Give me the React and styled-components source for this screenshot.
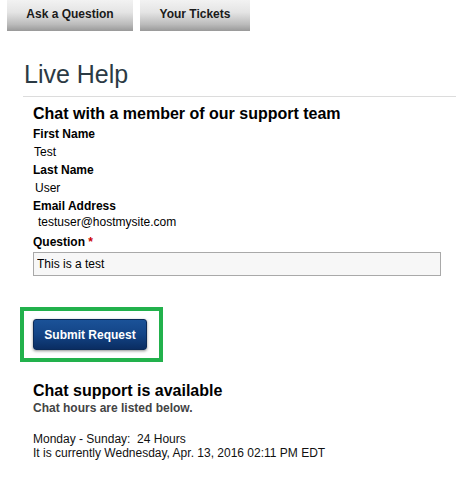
import React from "react";
import styled, { createGlobalStyle } from "styled-components";

const GlobalStyle = createGlobalStyle`
  body {
    margin: 0;
    background: #fff;
    font-family: "Liberation Sans", Arial, sans-serif;
    color: #000;
  }
`;

const Page = styled.div`
  width: 456px;
  height: 485px;
  overflow: hidden;
`;

const Tabs = styled.div`
  display: flex;
  gap: 7px;
  padding-left: 7px;
`;

const Tab = styled.div`
  width: ${(p) => p.w}px;
  height: 31px;
  display: flex;
  align-items: center;
  justify-content: center;
  padding-bottom: 3px;
  box-sizing: border-box;
  font-size: 12px;
  font-weight: bold;
  color: #1a1a1a;
  background: linear-gradient(#f2f2f2 0%, #e4e4e4 40%, #bcbcbc 78%, #999 100%);
`;

const Main = styled.div`
  padding: 28px 0 0 23px;
`;

const Title = styled.h1`
  margin: 0;
  padding: 0 0 7px 1px;
  font-size: 25px;
  font-weight: normal;
  line-height: 30px;
  color: #2b3a44;
  border-bottom: 1px solid #dcdcdc;
`;

const Form = styled.div`
  padding: 8px 0 0 10px;
`;

const FormTitle = styled.h2`
  margin: 0 0 2px;
  font-size: 16px;
  line-height: 18px;
  font-weight: bold;
`;

const Label = styled.div`
  font-size: 12px;
  font-weight: bold;
  line-height: 18px;
  margin-top: ${(p) => p.mt || 0}px;
`;

const Req = styled.span`
  color: #cc0000;
`;

const Value = styled.div`
  font-size: 12px;
  line-height: 18px;
  padding-left: ${(p) => p.indent || 1}px;
  margin-top: ${(p) => p.mt || 0}px;
`;

const Input = styled.input`
  display: block;
  box-sizing: border-box;
  width: 408px;
  height: 24px;
  margin-top: 1px;
  padding: 0 3px;
  border: 1px solid #a9a9a9;
  background: #f7f7f7;
  font-family: "Liberation Sans", Arial, sans-serif;
  font-size: 12px;
  color: #000;
  outline: none;
`;

const Highlight = styled.div`
  margin: 31px 0 0 -13px;
  width: 143px;
  height: 55px;
  box-sizing: border-box;
  border: 4px solid #22b14c;
  padding: 8px 0 0 9px;
`;

const SubmitButton = styled.button`
  width: 114px;
  height: 31px;
  border: 1px solid #0b2a58;
  border-radius: 3px;
  background: linear-gradient(#1b5298 0%, #134486 50%, #0a2d62 100%);
  box-shadow: 0 1px 3px rgba(0, 0, 0, 0.45);
  color: #fff;
  font-family: "Liberation Sans", Arial, sans-serif;
  font-size: 12px;
  font-weight: bold;
  padding: 0;
`;

const Section = styled.div`
  margin-top: 20px;
`;

const SectionTitle = styled.h3`
  margin: 0;
  font-size: 16px;
  line-height: 18px;
  font-weight: bold;
`;

const Sub = styled.div`
  margin-top: 1px;
  font-size: 12px;
  line-height: 15px;
  font-weight: bold;
  color: #444;
`;

const Hours = styled.div`
  margin-top: 17px;
  font-size: 12px;
  line-height: 13.5px;
  color: #111;
  white-space: pre;
`;

export default function App() {
  return (
    <Page>
      <GlobalStyle />
      <Tabs>
        <Tab w={126}>Ask a Question</Tab>
        <Tab w={110}>Your Tickets</Tab>
      </Tabs>
      <Main>
        <Title>Live Help</Title>
        <Form>
          <FormTitle>Chat with a member of our support team</FormTitle>
          <Label>First Name</Label>
          <Value>Test</Value>
          <Label>Last Name</Label>
          <Value indent={2}>User</Value>
          <Label>Email Address</Label>
          <Value indent={5} mt={-2}>testuser@hostmysite.com</Value>
          <Label mt={2}>
            Question <Req>*</Req>
          </Label>
          <Input defaultValue="This is a test" />
          <Highlight>
            <SubmitButton>Submit Request</SubmitButton>
          </Highlight>
          <Section>
            <SectionTitle>Chat support is available</SectionTitle>
            <Sub>Chat hours are listed below.</Sub>
            <Hours>
              {"Monday - Sunday:  24 Hours\nIt is currently Wednesday, Apr. 13, 2016 02:11 PM EDT"}
            </Hours>
          </Section>
        </Form>
      </Main>
    </Page>
  );
}
